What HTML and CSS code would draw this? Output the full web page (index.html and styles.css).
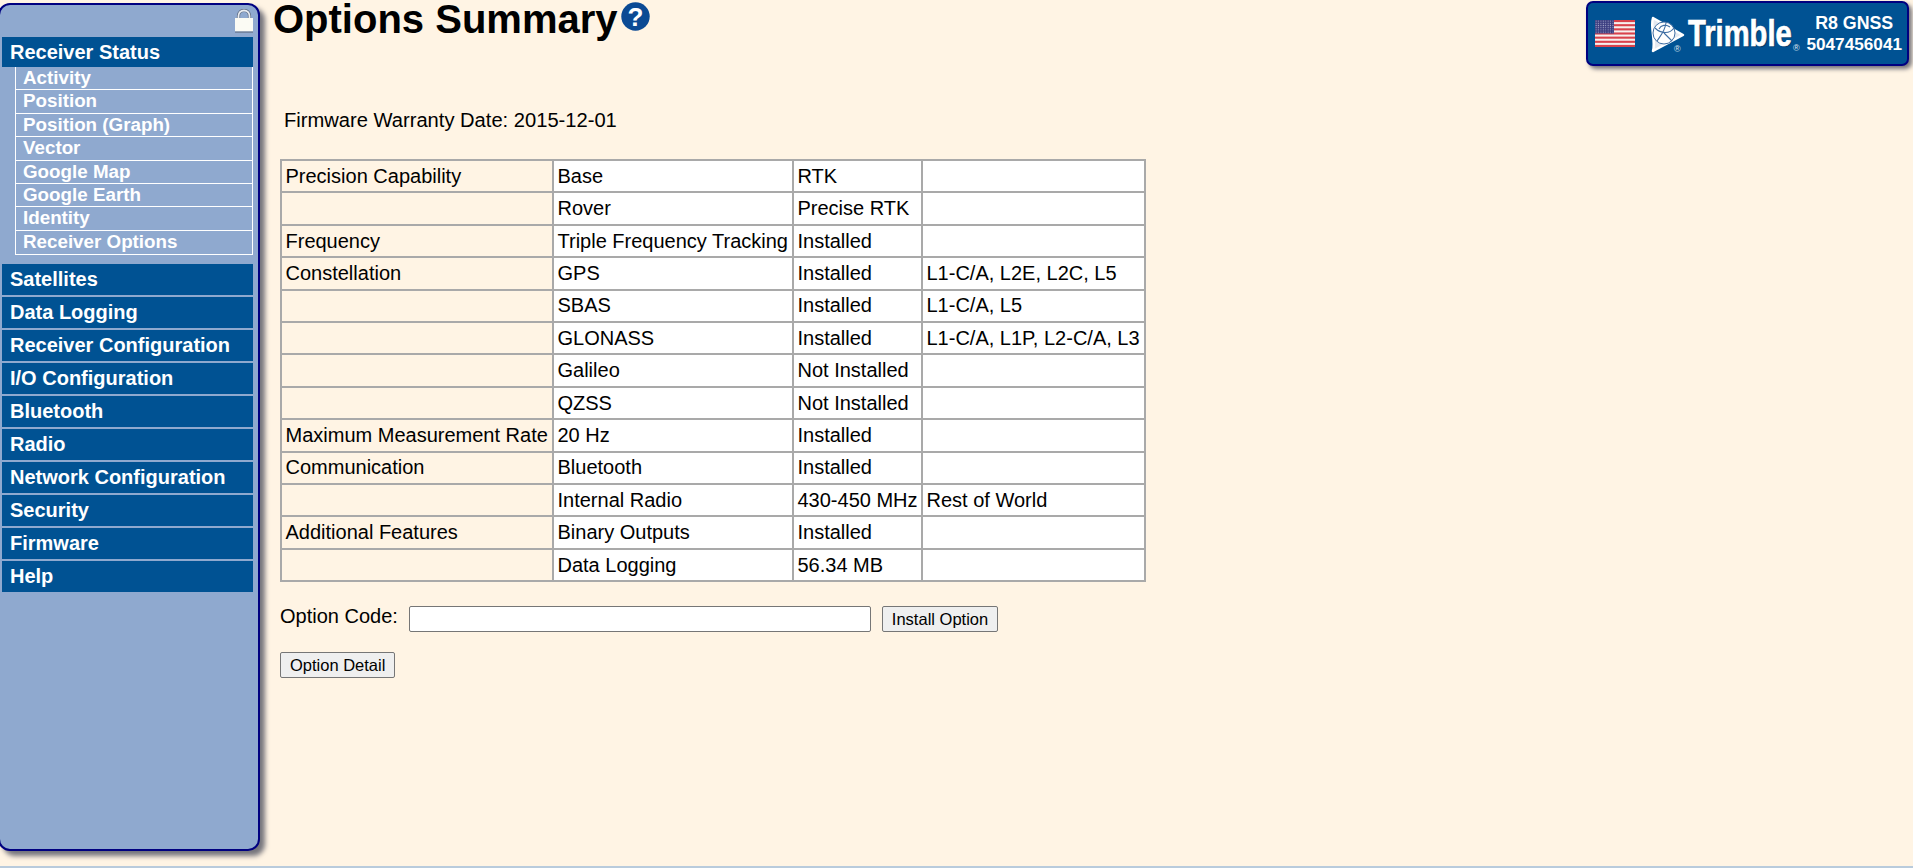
FILE: index.html
```html
<!DOCTYPE html>
<html lang="en">
<head>
<meta charset="utf-8">
<title>Options Summary</title>
<link rel="stylesheet" href="styles.css">
</head>
<body>
<div class="page">
  <aside class="side">
    <div class="lockrow">
      <svg class="lock" width="18" height="24" viewBox="0 0 18 24"><path d="M3.500 10V7C3.500 3.500 6 1.500 9 1.500S14.500 3.500 14.500 7V10" fill="none" stroke="#5d6a80" stroke-width="3.200"/><path d="M3.500 10V7C3.500 3.500 6 1.500 9 1.500S14.500 3.500 14.500 7V10" fill="none" stroke="#e9edf2" stroke-width="1.800"/><rect x="0" y="9" width="18" height="13.500" fill="#fbfbf4"/><rect x="0" y="22.500" width="18" height="1.200" fill="#66758c"/></svg>
    </div>
    <nav>
      <a class="head first">Receiver Status</a>
      <div class="sub">
        <a>Activity</a><a>Position</a><a>Position (Graph)</a><a>Vector</a><a>Google Map</a><a>Google Earth</a><a>Identity</a><a>Receiver Options</a>
      </div>
      <div class="heads">
        <a class="head">Satellites</a>
        <a class="head">Data Logging</a>
        <a class="head">Receiver Configuration</a>
        <a class="head">I/O Configuration</a>
        <a class="head">Bluetooth</a>
        <a class="head">Radio</a>
        <a class="head">Network Configuration</a>
        <a class="head">Security</a>
        <a class="head">Firmware</a>
        <a class="head">Help</a>
      </div>
    </nav>
  </aside>
  <main class="main">
    <div class="titlebar">
      <h1>Options Summary</h1>
      <svg class="help" width="29" height="29" viewBox="0 0 29 29"><circle cx="14.500" cy="14.500" r="14.200" fill="#0b4a94"/><text x="14.500" y="23.500" text-anchor="middle" class="helpq">?</text></svg>
    </div>
    <p class="warranty">Firmware Warranty Date: 2015-12-01</p>
    <table class="opts">
      <colgroup><col class="c1"><col class="c2"><col class="c3"><col class="c4"></colgroup>
      <tr><th>Precision Capability</th><td>Base</td><td>RTK</td><td></td></tr>
      <tr><th></th><td>Rover</td><td>Precise RTK</td><td></td></tr>
      <tr><th>Frequency</th><td>Triple Frequency Tracking</td><td>Installed</td><td></td></tr>
      <tr><th>Constellation</th><td>GPS</td><td>Installed</td><td>L1-C/A, L2E, L2C, L5</td></tr>
      <tr><th></th><td>SBAS</td><td>Installed</td><td>L1-C/A, L5</td></tr>
      <tr><th></th><td>GLONASS</td><td>Installed</td><td>L1-C/A, L1P, L2-C/A, L3</td></tr>
      <tr><th></th><td>Galileo</td><td>Not Installed</td><td></td></tr>
      <tr><th></th><td>QZSS</td><td>Not Installed</td><td></td></tr>
      <tr><th>Maximum Measurement Rate</th><td>20 Hz</td><td>Installed</td><td></td></tr>
      <tr><th>Communication</th><td>Bluetooth</td><td>Installed</td><td></td></tr>
      <tr><th></th><td>Internal Radio</td><td>430-450 MHz</td><td>Rest of World</td></tr>
      <tr><th>Additional Features</th><td>Binary Outputs</td><td>Installed</td><td></td></tr>
      <tr><th></th><td>Data Logging</td><td>56.34 MB</td><td></td></tr>
    </table>
    <form class="code">
      <label for="oc">Option Code:</label>
      <input id="oc" type="text">
      <button type="button">Install Option</button>
    </form>
    <button class="detail" type="button">Option Detail</button>
  </main>
  <div class="badge">
    <svg class="flag" width="40" height="27" viewBox="0 0 40 27">
      <defs><pattern id="stars" width="2.400" height="2.200" patternUnits="userSpaceOnUse"><rect width="2.400" height="2.200" fill="#3b3d80"/><rect x="0.600" y="0.600" width="1" height="1" fill="#aeb0d0"/></pattern></defs>
      <rect width="40" height="27" fill="#f6f0ee"/>
      <g fill="#d9424c"><rect y="0" width="40" height="2.100"/><rect y="4.150" width="40" height="2.100"/><rect y="8.300" width="40" height="2.100"/><rect y="12.450" width="40" height="2.100"/><rect y="16.600" width="40" height="2.100"/><rect y="20.750" width="40" height="2.100"/><rect y="24.900" width="40" height="2.100"/></g>
      <rect width="19" height="13.500" fill="url(#stars)"/>
    </svg>
    <svg class="mark" width="36" height="37" viewBox="0 0 36 37">
      <path d="M4 2L34 19L4 35C7 25 1 12 4 2Z" fill="#e4e9f0" stroke="#fff" stroke-width="2.500" stroke-linejoin="round"/>
      <circle cx="15" cy="17" r="11" fill="#fff" stroke="#3f6ea3" stroke-width="1"/>
      <path d="M6 12C12 18 21 18 25 12M8 25C12 19 16 15 17 7M15 17C18 20 21 23 23 25M10 13C12 9 17 8 21 11" fill="none" stroke="#3f6ea3" stroke-width="1.100"/>
      <text x="25" y="36" class="regmark">®</text>
    </svg>
    <span class="brand">Trimble</span>
    <span class="reg">®</span>
    <span class="device"><span class="model">R8 GNSS</span><span>5047456041</span></span>
  </div>
</div>
<div class="foot"></div>
</body>
</html>
```

FILE: styles.css
```css
html, body {
  margin: 0;
  height: 100%;
  overflow: hidden;
  background: #fff4e4;
  font-family: "Liberation Sans", Arial, sans-serif;
  color: #000;
}
.page {
  display: flex;
  height: 866px;
  position: relative;
}
.foot {
  height: 2px;
  background: #b9cbdc;
}
.side {
  box-sizing: border-box;
  width: 262px;
  height: 848px;
  margin: 3px 0 0 -2px;
  flex: none;
  background: #8fa9cf;
  border: 2px solid #000080;
  border-radius: 12px;
  box-shadow: 5px 5px 5px #76757c;
}
.lockrow {
  display: flex;
  justify-content: flex-end;
  box-sizing: border-box;
  padding: 4px 5px 0 0;
  height: 32px;
}
nav a {
  display: block;
  font-weight: bold;
  color: #fff;
}
.head {
  margin-left: 2px;
  margin-right: 5px;
  background: #005293;
  font-size: 20px;
  height: 31px;
  line-height: 31px;
  padding-left: 8px;
}
.head.first {
  height: 30px;
  line-height: 30px;
}
.sub {
  margin: 0 5px 9px 15px;
  border: 1px solid #fff;
  border-top: 0;
}
.sub a {
  box-sizing: border-box;
  font-size: 18.800px;
  height: 23.400px;
  line-height: 21px;
  padding-left: 7px;
  border-bottom: 1px solid #fff;
}
.sub a:last-child {
  border-bottom: 0;
}
.heads {
  display: flex;
  flex-direction: column;
  gap: 2px;
}
.main {
  padding-left: 20px;
  flex: 1;
}
.titlebar {
  display: flex;
  align-items: flex-start;
  margin-left: -7px;
  height: 40px;
}
h1 {
  margin: 0;
  font-size: 40px;
  line-height: 39px;
}
.help { margin: 2px 0 0 3px; }
.helpq {
  font: bold 26px "Liberation Sans", Arial, sans-serif;
  fill: #fff;
}
.warranty {
  margin: 69px 0 0 4px;
  font-size: 20.150px;
  line-height: 23px;
}
.opts {
  margin-top: 27px;
  border-collapse: collapse;
  table-layout: fixed;
  width: 864px;
  border: 2px solid #a9a9a9;
  font-size: 20px;
}
.c1 { width: 272px; }
.c2 { width: 240px; }
.c3 { width: 129px; }
.c4 { width: 223px; }
.opts th, .opts td {
  border: 2px solid #a9a9a9;
  height: 32.420px;
  padding: 0 3px 0 3.500px;
  box-sizing: border-box;
  white-space: nowrap;
  text-align: left;
  font-weight: normal;
}
.opts td { background: #fff; }
.code {
  display: flex;
  align-items: flex-start;
  margin: 24px 0 0;
  font-size: 20px;
  line-height: 21px;
  height: 26px;
}
.code input {
  box-sizing: border-box;
  width: 462px;
  height: 26px;
  margin: 0 11px;
  border: 1px solid #767676;
  border-radius: 2px;
  background: #fff;
}
button {
  box-sizing: border-box;
  height: 26px;
  padding: 0 9px;
  background: #efefef;
  border: 1px solid #767676;
  border-radius: 2px;
  font: 16.500px "Liberation Sans", Arial, sans-serif;
  color: #000;
}
.detail { margin-top: 20px; display: block; }
.badge {
  position: absolute;
  right: 4px;
  top: 1px;
  box-sizing: border-box;
  width: 323px;
  height: 65px;
  background: #005293;
  border: 2px solid #000080;
  border-radius: 7px;
  box-shadow: 3px 3px 4px #76757c;
  display: flex;
  align-items: center;
  color: #fff;
  padding: 0 5px 0 7px;
}
.mark { margin: 1px 0 0 14px; flex: none; }
.regmark {
  font: 9px "Liberation Sans", Arial, sans-serif;
  fill: #dfe6ef;
}
.brand {
  flex: none;
  font-weight: bold;
  font-size: 36px;
  line-height: 36px;
  width: 105px;
  margin-left: 3px;
  white-space: nowrap;
  transform: scaleX(0.81);
  transform-origin: left center;
  -webkit-text-stroke: 0.7px #fff;
  text-shadow: 1px 1px 1px #00305f;
}
.reg {
  align-self: flex-end;
  margin: 0 0 11px 0;
  font-size: 9px;
  line-height: 9px;
  color: #dfe6ef;
}
.device {
  margin-left: auto;
  display: flex;
  flex-direction: column;
  align-items: center;
  font-weight: bold;
  font-size: 17.200px;
  line-height: 21px;
}
.model { font-size: 17.800px; }
```
